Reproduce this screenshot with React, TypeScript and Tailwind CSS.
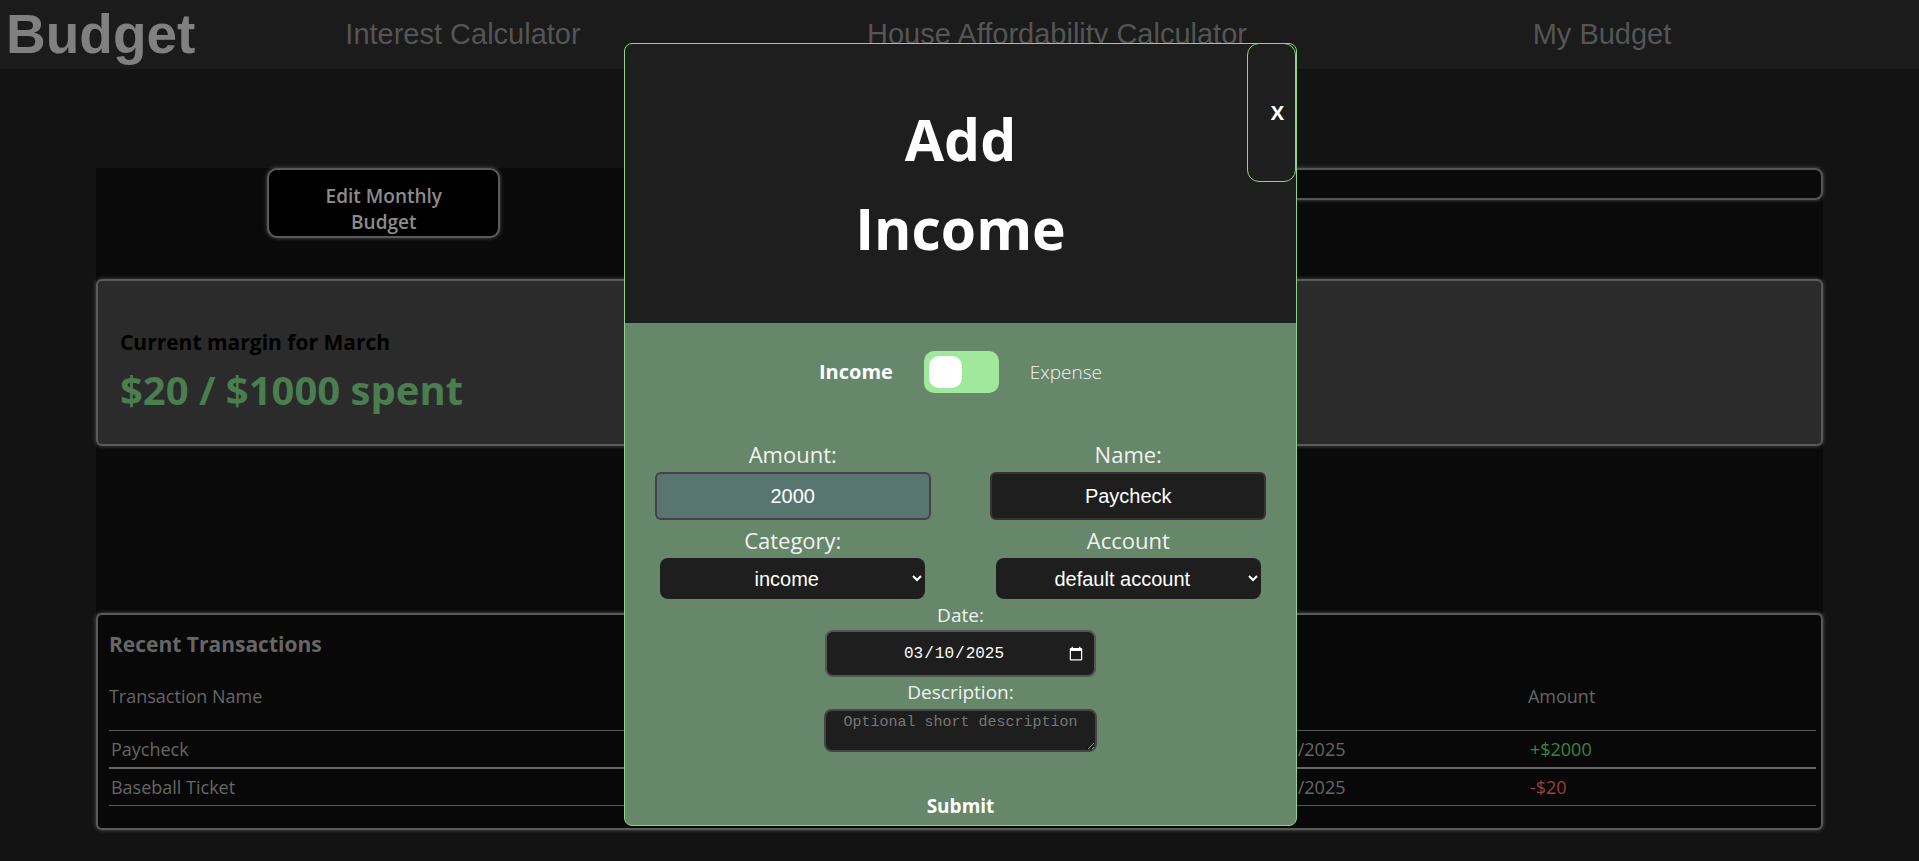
import React, { useState } from "react";

const transactions = [
  { name: "Paycheck", category: "income", date: "03/10/2025", amount: "+$2000", income: true },
  { name: "Baseball Ticket", category: "entertainment", date: "03/10/2025", amount: "-$20", income: false },
];

const AddTransactionModal = () => {
  const [isIncome, setIsIncome] = useState(true);

  return (
    <div className="absolute left-[624px] top-[43px] h-[783px] w-[673px] overflow-hidden rounded-[8px] border border-[#8fd18f] bg-[#66876a]">
      {/* title */}
      <div className="relative flex h-[279px] items-center justify-center bg-[#1e1e1e]">
        <h2 className="text-center text-[57px] font-bold leading-[89px] text-white">
          Add
          <br />
          {isIncome ? "Income" : "Expense"}
        </h2>
        <button className="absolute right-0 top-[-1px] h-[139px] w-[49px] rounded-[12px] border border-[#8fd18f] pl-[12px] text-[20px] font-bold text-white">
          X
        </button>
      </div>

      {/* form */}
      <div className="flex flex-col items-center pt-[28px] text-[#f2f2f2]">
        <div className="flex items-center gap-[31px] text-[20px]">
          <span className="font-bold text-white">Income</span>
          <button
            onClick={() => setIsIncome(!isIncome)}
            className="flex h-[42px] w-[75px] items-center rounded-[10px] bg-[#a0e99c] px-[5px]"
          >
            <span className={"h-[32px] w-[33px] rounded-[10px] bg-white " + (isIncome ? "" : "ml-auto")} />
          </button>
          <span className="text-[19px] font-light">Expense</span>
        </div>

        <div className="mt-[46px] grid w-full grid-cols-2">
          <div className="flex flex-col items-center">
            <label className="text-[22px] leading-[30px]">Amount:</label>
            <input
              defaultValue="2000"
              className="mt-[3px] h-[48px] w-[276px] rounded-[6px] border-2 border-[#444] bg-[#58756f] text-center font-['Liberation_Sans',Arial,sans-serif] text-[20px] text-white outline-none"
            />
            <label className="mt-[5px] text-[22px] leading-[30px]">Category:</label>
            <select className="mt-[3px] h-[41px] w-[265px] rounded-[8px] bg-[#1e1e1e] px-[8px] font-['Liberation_Sans',Arial,sans-serif] text-[20px] text-white [color-scheme:dark] [text-align-last:center]">
              <option>income</option>
              <option>groceries</option>
              <option>entertainment</option>
            </select>
          </div>
          <div className="flex flex-col items-center">
            <label className="text-[22px] leading-[30px]">Name:</label>
            <input
              defaultValue="Paycheck"
              className="mt-[3px] h-[48px] w-[276px] rounded-[6px] border-2 border-[#333] bg-[#1e1e1e] text-center font-['Liberation_Sans',Arial,sans-serif] text-[20px] text-white outline-none"
            />
            <label className="mt-[5px] text-[22px] leading-[30px]">Account</label>
            <select className="mt-[3px] h-[41px] w-[265px] rounded-[8px] bg-[#1e1e1e] px-[8px] font-['Liberation_Sans',Arial,sans-serif] text-[20px] text-white [color-scheme:dark] [text-align-last:center]">
              <option>default account</option>
            </select>
          </div>
        </div>

        <label className="mt-[4px] text-[19px] leading-[25px]">Date:</label>
        <input
          type="date"
          defaultValue="2025-03-10"
          className="mt-[2px] h-[47px] w-[271px] rounded-[8px] border-2 border-[#555] bg-[#1e1e1e] pl-[76px] pr-[8px] font-['Liberation_Mono',monospace] text-[16px] text-white [color-scheme:dark]"
        />
        <label className="mt-[3px] text-[19px] leading-[25px]">Description:</label>
        <textarea
          placeholder="Optional short description"
          className="mt-[4px] block h-[43px] w-[273px] rounded-[8px] border-2 border-[#444] bg-[#1e1e1e] px-[8px] pt-[1px] text-center font-['Liberation_Mono',monospace] text-[15px] text-white placeholder:text-[#777] [color-scheme:dark]"
        />
        <button className="mt-[42px] text-[19px] font-bold leading-[25px] text-white">Submit</button>
      </div>
    </div>
  );
};

export default function App() {
  return (
    <div className="relative min-h-screen bg-[#131313] pb-[32px] font-['Open_Sans',sans-serif]">
      <nav className="flex h-[69px] items-center bg-[#1b1b1b] font-['Liberation_Sans',Arial,sans-serif]">
        <a href="#" className="w-[200px] pl-[6px] text-[55px] font-bold leading-none text-[#808080]">
          Budget
        </a>
        <a href="#" className="w-[526px] text-center text-[29px] text-[#555]">
          Interest Calculator
        </a>
        <a href="#" className="w-[662px] text-center text-[29px] text-[#555]">
          House Affordability Calculator
        </a>
        <a href="#" className="w-[428px] text-center text-[29px] text-[#555]">
          My Budget
        </a>
      </nav>

      <main className="mx-auto mt-[99px] w-[90%]">
        <section className="bg-[#0a0a0a]">
          <div className="grid grid-cols-3 items-start">
            <div className="flex justify-center">
              <button className="h-[70px] w-[233px] rounded-[10px] border-2 border-[#5a5a5a] bg-black pt-[11px] text-[19px] font-semibold leading-[26px] text-[#8c8c8c] shadow-[0_0_4px_rgba(255,255,255,0.3)]">
                Edit Monthly
                <br />
                Budget
              </button>
            </div>
            <div className="col-span-2">
              <div className="h-[32px] overflow-hidden rounded-[8px] border-2 border-[#555] bg-[#0a0a0a] shadow-[0_0_4px_rgba(255,255,255,0.3)]">
                <div className="h-full w-[2%] bg-[#4a7d4f]" />
              </div>
            </div>
          </div>

          <div className="mt-[41px] h-[167px] rounded-[6px] border-2 border-[#5a5a5a] bg-[#2b2b2b] pl-[22px] pt-[47px] shadow-[0_0_4px_rgba(255,255,255,0.3)]">
            <h3 className="text-[21px] font-bold leading-[28px] text-black">Current margin for March</h3>
            <p className="mt-[9px] text-[40px] font-bold leading-[50px] text-[#4a7d4f]">$20 / $1000 spent</p>
          </div>

          <div className="h-[167px]" />
        </section>

        <section className="h-[217px] rounded-[6px] border-2 border-[#5a5a5a] bg-[#080808] pl-[11px] pr-[5px] pt-[15px] shadow-[0_0_4px_rgba(255,255,255,0.3)]">
          <h3 className="text-[21px] font-bold leading-[28px] text-[#666]">Recent Transactions</h3>
          <div className="mt-[26px] text-[18px] leading-[24px] text-[#666]">
            <div className="grid grid-cols-[566px_573px_280px_1fr] border-b border-[#555] pb-[22px]">
              <span>Transaction Name</span>
              <span>Category</span>
              <span>Date</span>
              <span>Amount</span>
            </div>
            {transactions.map((t, i) => (
              <div
                key={t.name}
                className={
                  "grid grid-cols-[566px_573px_280px_1fr] py-[6px] pl-[2px] " +
                  (i === 0 ? "border-b-2 border-[#666]" : "border-b border-[#555]")
                }
              >
                <span>{t.name}</span>
                <span>{t.category}</span>
                <span>{t.date}</span>
                <span className={t.income ? "text-[#3f833f]" : "text-[#9c3f3f]"}>{t.amount}</span>
              </div>
            ))}
          </div>
        </section>
      </main>

      <AddTransactionModal />
    </div>
  );
}
